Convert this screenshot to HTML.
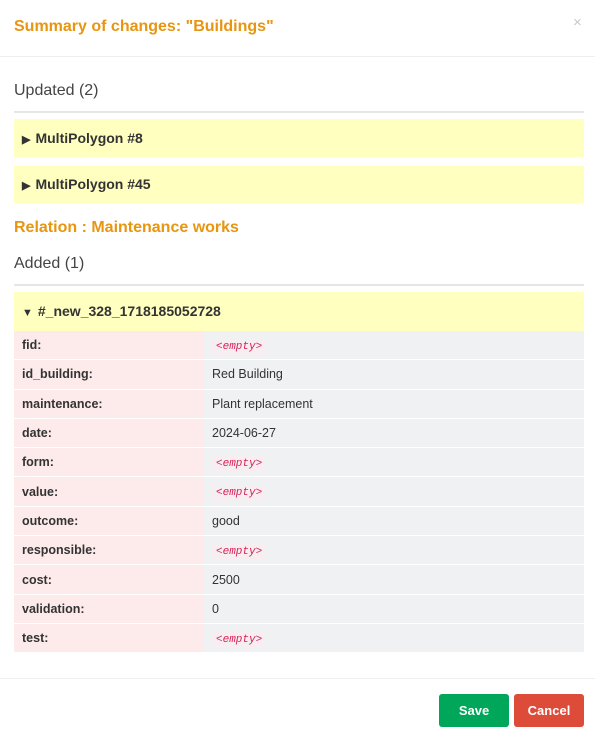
<!DOCTYPE html><html><head><style>
body{margin:0;width:595px;height:741px;background:#fff;font-family:"Liberation Sans",sans-serif;color:#333;position:relative;overflow:hidden}
.a{position:absolute}
.t{color:#e8950f;font-weight:bold;font-size:16px}
.y{left:14px;width:570px;background:#ffffc0;font-weight:bold;font-size:14px;box-sizing:border-box;padding-left:8px}
.h{font-size:16px;color:#444}
.hr{left:14px;width:570px;height:2px;background:#e6e6e6}
table{border-collapse:collapse;width:570px;font-size:12.5px}
td{height:28.3px;border-bottom:1px solid #fff;padding:0 0 0 8px}
td.k{background:#fdebeb;font-weight:bold;width:182px;color:#333}
td.v{background:#f0f1f3;color:#333}
.e{color:#d6245a;font-style:italic;font-family:"Liberation Mono",monospace;font-size:11px;background:#f7eef1;padding:2px 4px}
.b{top:694px;height:33px;border-radius:3px;color:#fff;font-weight:bold;font-size:13px;text-align:center;line-height:33px}
.tri{font-size:11px;margin-right:5px}
</style></head><body>
<div class="a t" style="left:14px;top:18px">Summary of changes: "Buildings"</div>
<div class="a" style="left:573px;top:14px;color:#c8c8c8;font-size:15px">×</div>
<div class="a" style="left:0;top:56px;width:595px;height:1px;background:#eee"></div>
<div class="a h" style="left:14px;top:82px">Updated (2)</div>
<div class="a hr" style="top:111px"></div>
<div class="a y" style="top:119px;height:38px;line-height:38px"><span class="tri">▶</span>MultiPolygon #8</div>
<div class="a y" style="top:166px;height:37px;line-height:37px"><span class="tri">▶</span>MultiPolygon #45</div>
<div class="a t" style="left:14px;top:219px">Relation : Maintenance works</div>
<div class="a h" style="left:14px;top:255px">Added (1)</div>
<div class="a hr" style="top:284px"></div>
<div class="a y" style="top:292px;height:39px;line-height:38px"><span class="tri">▼</span>#_new_328_1718185052728</div>
<table class="a" style="left:14px;top:331px">
<tr><td class="k">fid:</td><td class="v"><span class="e">&lt;empty&gt;</span></td></tr>
<tr><td class="k">id_building:</td><td class="v">Red Building</td></tr>
<tr><td class="k">maintenance:</td><td class="v">Plant replacement</td></tr>
<tr><td class="k">date:</td><td class="v">2024-06-27</td></tr>
<tr><td class="k">form:</td><td class="v"><span class="e">&lt;empty&gt;</span></td></tr>
<tr><td class="k">value:</td><td class="v"><span class="e">&lt;empty&gt;</span></td></tr>
<tr><td class="k">outcome:</td><td class="v">good</td></tr>
<tr><td class="k">responsible:</td><td class="v"><span class="e">&lt;empty&gt;</span></td></tr>
<tr><td class="k">cost:</td><td class="v">2500</td></tr>
<tr><td class="k">validation:</td><td class="v">0</td></tr>
<tr><td class="k">test:</td><td class="v"><span class="e">&lt;empty&gt;</span></td></tr>
</table>
<div class="a" style="left:0;top:678px;width:595px;height:1px;background:#eee"></div>
<div class="a b" style="left:439px;width:70px;background:#00a65a">Save</div>
<div class="a b" style="left:514px;width:70px;background:#dd4b39">Cancel</div>
</body></html>
